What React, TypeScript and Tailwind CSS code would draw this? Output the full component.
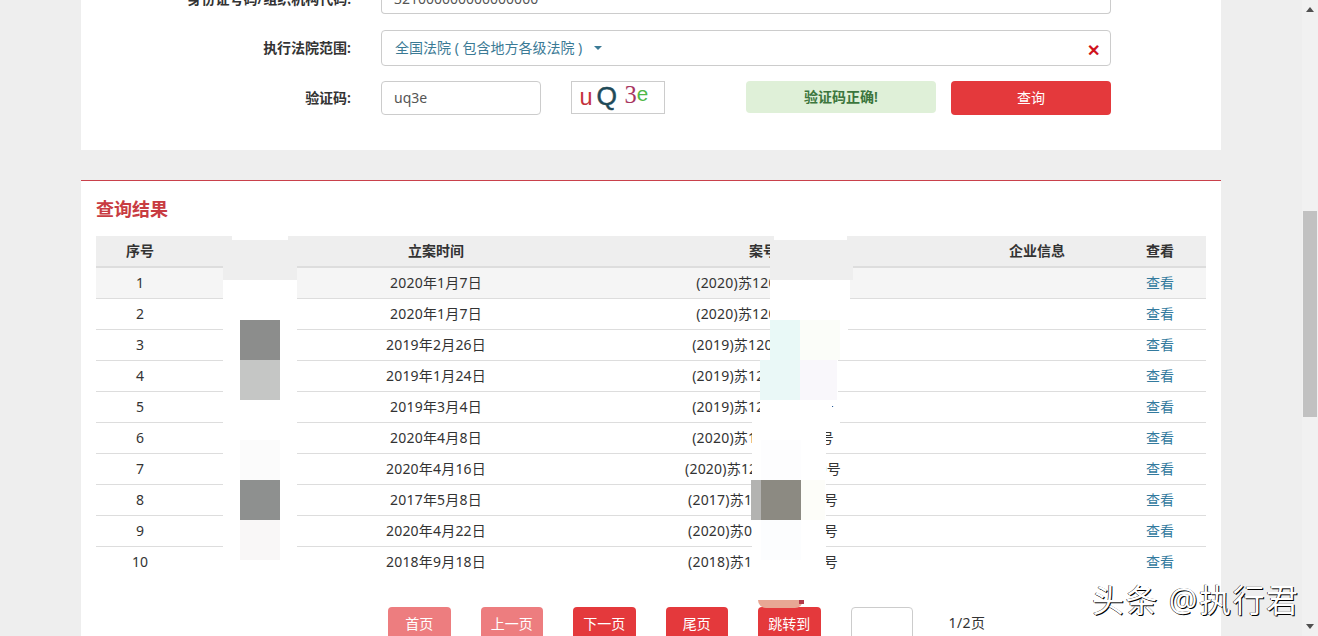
import React from 'react';

const rows = [
  ['1', '2020年1月7日', '(2020)苏120执000号'],
  ['2', '2020年1月7日', '(2020)苏120执000号'],
  ['3', '2019年2月26日', '(2019)苏120执0000号'],
  ['4', '2019年1月24日', '(2019)苏120执0000号'],
  ['5', '2019年3月4日', '(2019)苏120执0000号'],
  ['6', '2020年4月8日', '(2020)苏120执0000号'],
  ['7', '2020年4月16日', '(2020)苏120执恢0000号'],
  ['8', '2017年5月8日', '(2017)苏120执00000号'],
  ['9', '2020年4月22日', '(2020)苏050执00000号'],
  ['10', '2018年9月18日', '(2018)苏120执00000号'],
];

// pieces of the mosaic that hides names and case numbers
const masks = [
  'left-[232px] top-[236px] w-[56px] h-[4px] bg-white',
  'left-[223px] top-[240px] w-[74px] h-[40px] bg-[#eeeeee]',
  'left-[223px] top-[280px] w-[74px] h-[300px] bg-white',
  'left-[240px] top-[320px] w-[40px] h-[40px] bg-[#8c8d8c]',
  'left-[240px] top-[360px] w-[40px] h-[40px] bg-[#c5c6c5]',
  'left-[240px] top-[440px] w-[40px] h-[40px] bg-[#fbfbfb]',
  'left-[240px] top-[480px] w-[40px] h-[40px] bg-[#8e908f]',
  'left-[240px] top-[520px] w-[40px] h-[40px] bg-[#f9f7f7]',
  'left-[774px] top-[236px] w-[73px] h-[4px] bg-white',
  'left-[770px] top-[240px] w-[83px] h-[40px] bg-[#eeeeee]',
  'left-[770px] top-[280px] w-[80px] h-[40px] bg-white',
  'left-[770px] top-[320px] w-[78px] h-[40px] bg-white',
  'left-[760px] top-[360px] w-[78px] h-[40px] bg-white',
  'left-[760px] top-[400px] w-[72px] h-[20px] bg-white',
  'left-[752px] top-[420px] w-[74px] h-[180px] bg-white',
  'left-[826px] top-[420px] w-[14px] h-[11px] bg-white',
  'left-[770px] top-[320px] w-[30px] h-[40px] bg-[#e9f9f7]',
  'left-[800px] top-[320px] w-[40px] h-[40px] bg-[#fbfdf9]',
  'left-[760px] top-[360px] w-[40px] h-[40px] bg-[#eaf8f7]',
  'left-[800px] top-[360px] w-[37px] h-[40px] bg-[#f9f7fb]',
  'left-[761px] top-[440px] w-[40px] h-[40px] bg-[#fdfdfe]',
  'left-[751px] top-[480px] w-[10px] h-[40px] bg-[#b3b3b1]',
  'left-[761px] top-[480px] w-[40px] h-[40px] bg-[#8c8a82]',
  'left-[801px] top-[480px] w-[24px] h-[40px] bg-[#fdfdf9]',
  'left-[761px] top-[520px] w-[40px] h-[40px] bg-[#fcfdfe]',
  'left-[758px] top-[600px] w-[45px] h-[8px] rounded-b-full bg-[#e8a794]',
  'left-[799px] top-[600px] w-[5px] h-[4px] bg-[#b33a4a]',
];

const gridCols = 'grid grid-cols-[88px_122px_260px_394px_154px_92px] items-center text-center';

function Label({ children }: { children: React.ReactNode }) {
  return <div className="w-[270px] shrink-0 text-right text-sm font-semibold text-[#333]">{children}</div>;
}

function PageButton({ label, faded }: { label: string; faded?: boolean }) {
  return (
    <button className={`w-[62.5px] h-[34px] rounded text-sm text-white bg-[#e4393c] ${faded ? 'opacity-65' : ''}`}>
      {label}
    </button>
  );
}

export default function App() {
  return (
    <div className="relative flex h-[636px] w-[1318px] overflow-hidden bg-[#eeeeee] font-['Noto_Sans','Noto_Sans_CJK_SC',sans-serif]">
      <div className="w-[1302px] shrink-0 px-[81px]">
        {/* Search form */}
        <div className="-mt-[16px] flex h-[166px] flex-col bg-white">
          <div className="flex h-[30px] items-center">
            <Label>身份证号码/组织机构代码:</Label>
            <div className="ml-[30px] flex h-[30px] w-[730px] items-center rounded-b border border-t-0 border-[#ccc] px-3 text-sm text-[#555]">
              321000000000000000
            </div>
          </div>
          <div className="mt-4 flex h-[36px] items-center">
            <Label>执行法院范围:</Label>
            <div className="ml-[30px] flex h-[36px] w-[730px] items-center rounded border border-[#ccc] pl-[13px] pr-[10px] text-sm text-[#3b7a95]">
              全国法院 ( 包含地方各级法院 )
              <span className="ml-[12px] h-0 w-0 border-x-4 border-t-4 border-x-transparent border-t-[#3b7a95]" />
              <span className="ml-auto mt-1 text-base font-bold leading-none text-[#d0121b]">✕</span>
            </div>
          </div>
          <div className="mt-[15px] flex h-[34px] items-start">
            <div className="flex h-[34px] items-center">
              <Label>验证码:</Label>
            </div>
            <div className="ml-[30px] flex h-[34px] w-[160px] items-center rounded border border-[#ccc] px-3 text-sm text-[#555]">
              uq3e
            </div>
            <svg viewBox="0 0 94 33" className="ml-[30px] h-[33px] w-[94px] border border-[#ccc]">
              <text x="6" y="24" fontSize="25" fontFamily="Liberation Sans" fill="#c4313d">u</text>
              <text x="24" y="24" fontSize="28" fontFamily="Liberation Sans" fill="#1f4a58" stroke="#1f4a58" strokeWidth="0.5">Q</text>
              <text x="54" y="22" fontSize="26" fontFamily="Liberation Serif" fill="#a8365f">3</text>
              <text x="67" y="20" fontSize="22" fontFamily="Liberation Sans" fill="#4fb848">e</text>
            </svg>
            <div className="ml-[81px] flex h-[32px] w-[190px] items-center justify-center rounded bg-[#dff0d8] text-sm font-semibold text-[#3c763d]">
              验证码正确!
            </div>
            <button className="ml-[15px] h-[34px] w-[160px] rounded bg-[#e4393c] text-sm text-white">查询</button>
          </div>
        </div>

        {/* Results */}
        <div className="mt-[30px] h-[480px] border-t border-[#c9414b] bg-white px-[15px] pt-[15px]">
          <h2 className="mb-[14px] h-[26px] text-lg font-bold leading-[26px] text-[#c83c42]">查询结果</h2>
          <div className="text-sm text-[#333]">
            <div className={`${gridCols} h-[32px] border-b-2 border-[#ddd] bg-[#eeeeee] font-semibold`}>
              <span>序号</span>
              <span />
              <span>立案时间</span>
              <span>案号</span>
              <span>企业信息</span>
              <span>查看</span>
            </div>
            {rows.map((r, i) => (
              <div
                key={r[0]}
                className={`${gridCols} ${i === 0 ? 'h-[30px] bg-[#f5f5f5]' : 'h-[31px] border-t border-[#ddd]'}`}
              >
                <span>{r[0]}</span>
                <span />
                <span className="tracking-[0.2px]">{r[1]}</span>
                <span className="tracking-[0.2px]">{r[2]}</span>
                <span />
                <span className="text-[#337a9e]">查看</span>
              </div>
            ))}
          </div>
          <div className="mt-[30px] flex items-start pl-[292px] text-sm text-[#333]">
            <div className="flex gap-[30px]">
              <PageButton label="首页" faded />
              <PageButton label="上一页" faded />
              <PageButton label="下一页" />
              <PageButton label="尾页" />
              <PageButton label="跳转到" />
            </div>
            <div className="ml-[30px] h-[34px] w-[62px] rounded border border-[#ccc]" />
            <span className="ml-[36px] mt-[6px] tracking-[0.4px]">1/2页</span>
          </div>
        </div>
      </div>

      {/* Scrollbar */}
      <div className="flex w-4 shrink-0 flex-col items-center justify-between bg-[#f1f1f1] py-[7px]">
        <span className="h-0 w-0 border-x-4 border-b-[5px] border-x-transparent border-b-[#505050]" />
        <span className="h-0 w-0 border-x-4 border-t-[5px] border-x-transparent border-t-[#505050]" />
      </div>
      <div className="absolute left-[1303px] top-[211px] h-[206px] w-[14px] bg-[#c1c1c1]" />

      {masks.map((m) => (
        <div key={m} className={`absolute ${m}`} />
      ))}

      {/* Watermark */}
      <div className="absolute left-[1092px] top-[577px] text-[32px] leading-[46px] tracking-[1.5px] text-white [text-shadow:1px_1px_0_#000,-0.5px_0_0_#000]">
        头条 @执行君
      </div>
    </div>
  );
}
